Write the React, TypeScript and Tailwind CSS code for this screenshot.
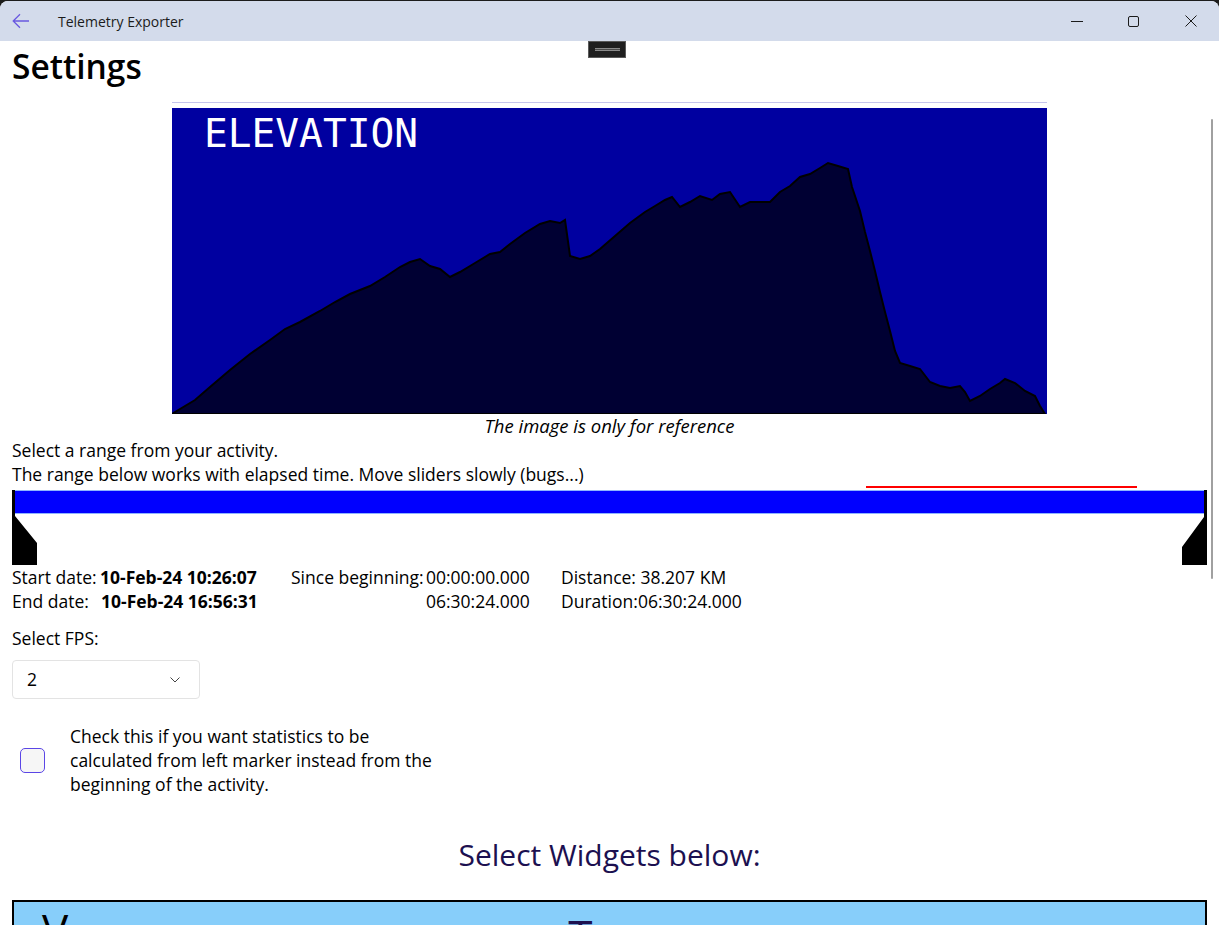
import React from "react";

const profile: [number, number][] = [
  [172, 413], [180, 408], [195, 399], [210, 386], [230, 369], [250, 353], [270, 339],
  [285, 328], [300, 321], [320, 310], [335, 301], [350, 293], [370, 285], [385, 276],
  [400, 266], [410, 261], [420, 258], [430, 265], [440, 268], [450, 276], [460, 271],
  [475, 262], [490, 253], [500, 251], [510, 243], [525, 232], [540, 223], [550, 220],
  [560, 222], [565, 219], [570, 255], [580, 258], [590, 255], [600, 248], [615, 235],
  [630, 222], [645, 211], [655, 205], [665, 199], [672, 196], [680, 206], [690, 201],
  [700, 195], [712, 199], [720, 193], [730, 191], [740, 206], [750, 201], [770, 201],
  [780, 191], [790, 185], [800, 176], [810, 173], [820, 167], [828, 162], [838, 165],
  [848, 168], [852, 186], [860, 210], [865, 231], [870, 250], [875, 270], [880, 291],
  [885, 311], [890, 330], [895, 350], [900, 362], [910, 365], [920, 368], [930, 381],
  [940, 385], [950, 387], [960, 385], [965, 391], [970, 400], [980, 395], [990, 388],
  [1000, 382], [1005, 378], [1015, 382], [1025, 390], [1035, 395], [1040, 405], [1045, 413],
];

const ElevationChart = () => (
  <svg viewBox="172 107 875 306" className="block w-[875px] h-[306px]">
    <rect x="172" y="107" width="875" height="306" fill="#0000a0" />
    <text
      x="204"
      y="146"
      fill="#ffffff"
      fontSize="39.5"
      fontFamily="'DejaVu Sans Mono', monospace"
    >
      ELEVATION
    </text>
    <polygon
      points={profile.map(([x, y]) => `${x},${y}`).join(" ")}
      fill="#000033"
      stroke="#000000"
      strokeWidth="2"
    />
  </svg>
);

const RangeSlider = () => (
  <div className="relative h-[75px] mt-[4px]">
    <div className="absolute top-[-4px] left-[854px] w-[271px] h-[2px] bg-[#ff0000]" />
    <div className="h-[24px] bg-[#0000ff] border-y border-[#8fb4ff]" />
    <svg className="absolute left-0 top-0" width="25" height="75" viewBox="0 0 25 75">
      <polygon points="0,0 3,0 3,26 25,53 25,75 0,75" fill="#000" />
    </svg>
    <svg className="absolute right-0 top-0" width="25" height="75" viewBox="0 0 25 75">
      <polygon points="25,0 22,0 22,27 0,57 0,75 25,75" fill="#000" />
    </svg>
  </div>
);

export default function App() {
  return (
    <div
      className="w-[1219px] h-[925px] overflow-hidden bg-[#1c1c1c] pt-px"
      style={{ fontFamily: "'Open Sans', 'Noto Sans', sans-serif" }}
    >
      <div className="relative h-full bg-white rounded-t-[8px] overflow-hidden">
        {/* title bar */}
        <div className="h-[40px] bg-[#d3dbeb] flex items-center">
          <svg className="ml-[12px]" width="18" height="16" viewBox="0 0 18 16">
            <path d="M17 8H1.5M8 1.2L1.2 8 8 14.8" fill="none" stroke="#6a5ae0" strokeWidth="1.3" />
          </svg>
          <span className="ml-[28px] text-[14px] text-[#1b1b1b]">Telemetry Exporter</span>
          <div className="ml-auto flex items-center h-full">
            <div className="w-[57px] h-full flex items-center justify-center">
              <div className="w-[12px] h-px bg-[#1b1b1b]" />
            </div>
            <div className="w-[57px] h-full flex items-center justify-center">
              <div className="w-[11px] h-[11px] border border-[#1b1b1b] rounded-[2px]" />
            </div>
            <div className="w-[57px] h-full flex items-center justify-center">
              <svg width="12" height="12" viewBox="0 0 12 12">
                <path d="M0.5 0.5L11.5 11.5M11.5 0.5L0.5 11.5" stroke="#1b1b1b" strokeWidth="1" />
              </svg>
            </div>
          </div>
        </div>

        {/* drag handle */}
        <div className="absolute left-[588px] top-[40px] w-[38px] h-[17px] bg-[#1f1f1f] border border-[#5a5a5a] flex items-center justify-center">
          <div className="w-[25px] h-[3px] border-y border-[#8a8a8a] bg-[#4a4a4a]" />
        </div>

        {/* scrollbar */}
        <div className="absolute right-[6px] top-[118px] w-[2px] h-[460px] bg-[#a0a0a0] rounded-full" />

        <div className="px-3 text-[17.5px] text-black">
          <h1 className="text-[33.5px] leading-[46px] font-semibold mt-[2px]">Settings</h1>
          <div className="mx-auto w-[875px] h-px bg-[#c4c4ec] mt-[13px]" />
          <div className="mx-auto w-[875px] mt-[5px]">
            <ElevationChart />
          </div>
          <p className="text-center italic text-[18.5px] leading-[24px]">The image is only for reference</p>
          <p className="leading-[24px]">Select a range from your activity.</p>
          <p className="leading-[24px]">The range below works with elapsed time. Move sliders slowly (bugs...)</p>

          <RangeSlider />

          <div className="grid grid-cols-[88px_191px_135px_135px_77px_1fr] leading-[24px]">
            <span>Start date:</span>
            <span className="font-bold">10-Feb-24 10:26:07</span>
            <span>Since beginning:</span>
            <span>00:00:00.000</span>
            <span className="col-span-2">Distance: 38.207 KM</span>
            <span>End date:</span>
            <span className="font-bold pl-px">10-Feb-24 16:56:31</span>
            <span />
            <span>06:30:24.000</span>
            <span>Duration:</span>
            <span>06:30:24.000</span>
          </div>

          <p className="leading-[24px] mt-[13px]">Select FPS:</p>
          <div className="mt-[10px] w-[188px] h-[39px] border border-[#e3e3e3] rounded-[4px] flex items-center pl-[14px] pr-[19px]">
            <span>2</span>
            <svg className="ml-auto" width="10" height="6" viewBox="0 0 10 6">
              <path d="M0.5 0.5L5 5 9.5 0.5" fill="none" stroke="#444" strokeWidth="1" />
            </svg>
          </div>

          <div className="mt-[25px] flex items-center">
            <div className="ml-[8px] w-[25px] h-[25px] border border-[#5b46e6] rounded-[5px] bg-[#f6f6f6]" />
            <p className="ml-[25px] leading-[24px]">
              Check this if you want statistics to be
              <br />
              calculated from left marker instead from the
              <br />
              beginning of the activity.
            </p>
          </div>

          <h2 className="mt-[39px] text-center text-[30px] leading-[40px] text-[#1c1050]">
            Select Widgets below:
          </h2>

          <div className="mt-[25px] h-[120px] border-2 border-black bg-[#87cefa] flex">
            <span className="ml-[28px] mt-[2px] text-[44px] leading-[50px] text-black">V</span>
            <span className="ml-[500px] mt-[8px] text-[44px] leading-[50px] text-[#1c1050]">T</span>
          </div>
        </div>
      </div>
    </div>
  );
}
